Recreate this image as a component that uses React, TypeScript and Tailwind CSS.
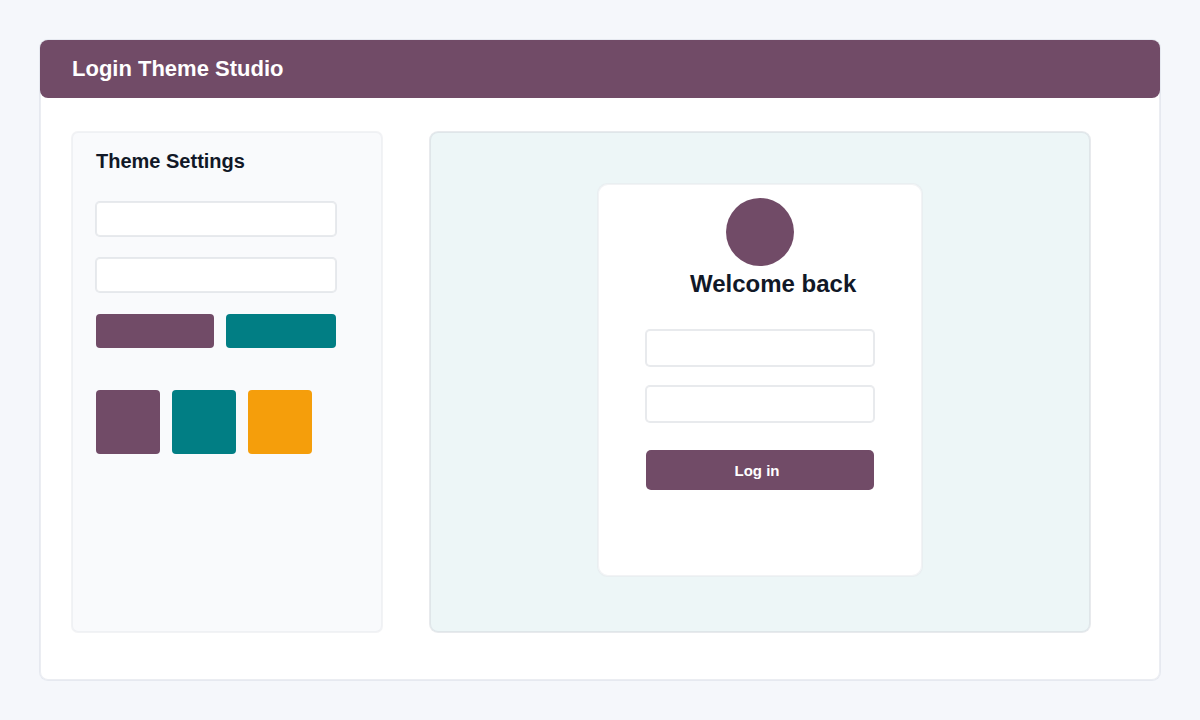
import React from 'react';

const swatches = [
  { name: 'Plum', color: 'bg-[#714b67]' },
  { name: 'Teal', color: 'bg-[#017e84]' },
  { name: 'Amber', color: 'bg-[#f59e0b]' }
];

function TextField({ label, type = 'text', className }: { label: string; type?: string; className: string }) {
  return (
    <input
      type={type}
      aria-label={label}
      className={`block w-full rounded bg-white px-3 text-sm text-gray-900 outline-none ring-1 inset-ring-1 ring-[#d1d5db]/50 inset-ring-[#d1d5db]/50 ${className}`}
    />
  );
}

function ThemeSettings() {
  return (
    <section className="w-[310px] shrink-0 rounded-md bg-[#f9fafc] pt-4 pl-6 pr-[46px] ring-1 inset-ring-1 ring-[#e5e7eb]/50 inset-ring-[#e5e7eb]/50">
      <h2 className="text-[20px] leading-[26px] font-bold text-[#111827]">Theme Settings</h2>
      <div className="mt-7 flex flex-col gap-[22px]">
        <TextField label="Theme name" className="h-[34px]" />
        <TextField label="Company name" className="h-[34px]" />
        <div className="flex gap-3">
          <button type="button" aria-label="Primary color" className="h-[34px] w-[118px] rounded bg-[#714b67]" />
          <button type="button" aria-label="Secondary color" className="h-[34px] flex-1 rounded bg-[#017e84]" />
        </div>
      </div>
      <div className="mt-[42px] flex gap-3">
        {swatches.map((swatch) => (
          <button
            key={swatch.name}
            type="button"
            aria-label={swatch.name}
            className={`h-16 w-16 rounded ${swatch.color}`}
          />
        ))}
      </div>
    </section>
  );
}

function LoginPreview() {
  return (
    <section className="flex flex-1 justify-center rounded-lg bg-[#edf6f7] pt-[52px] pb-14 ring-1 inset-ring-1 ring-[#d1d5db]/50 inset-ring-[#d1d5db]/50">
      <form
        onSubmit={(e) => e.preventDefault()}
        className="w-[324px] rounded-[10px] bg-white px-12 pt-3.5 pb-[86px] ring-1 inset-ring-1 ring-[#e5e7eb]/50 inset-ring-[#e5e7eb]/50"
      >
        <div className="mx-auto h-[68px] w-[68px] rounded-full bg-[#714b67]" />
        <h2 className="pl-11 text-[24px] leading-9 font-bold whitespace-nowrap text-[#111827]">Welcome back</h2>
        <div className="mt-7 flex flex-col gap-5">
          <TextField label="Email" type="email" className="h-9" />
          <TextField label="Password" type="password" className="h-9" />
        </div>
        <button
          type="submit"
          className="mt-7 block h-10 w-full rounded-[5px] bg-[#714b67] pt-0.5 pr-1.5 text-center text-[15px] font-bold text-white"
        >
          Log in
        </button>
      </form>
    </section>
  );
}

export default function App() {
  return (
    <div className="min-h-screen bg-[#f5f7fb] p-10 font-['Liberation_Sans',Arial,sans-serif]">
      <main className="rounded-lg bg-white ring-1 inset-ring-1 ring-[#d8dbe6]/50 inset-ring-[#d8dbe6]/50">
        <header className="flex h-[58px] items-center rounded-lg bg-[#714b67] px-8">
          <h1 className="text-[22px] leading-7 font-bold text-white">Login Theme Studio</h1>
        </header>
        <div className="flex gap-12 pt-[34px] pr-[70px] pb-12 pl-8">
          <ThemeSettings />
          <LoginPreview />
        </div>
      </main>
    </div>
  );
}
